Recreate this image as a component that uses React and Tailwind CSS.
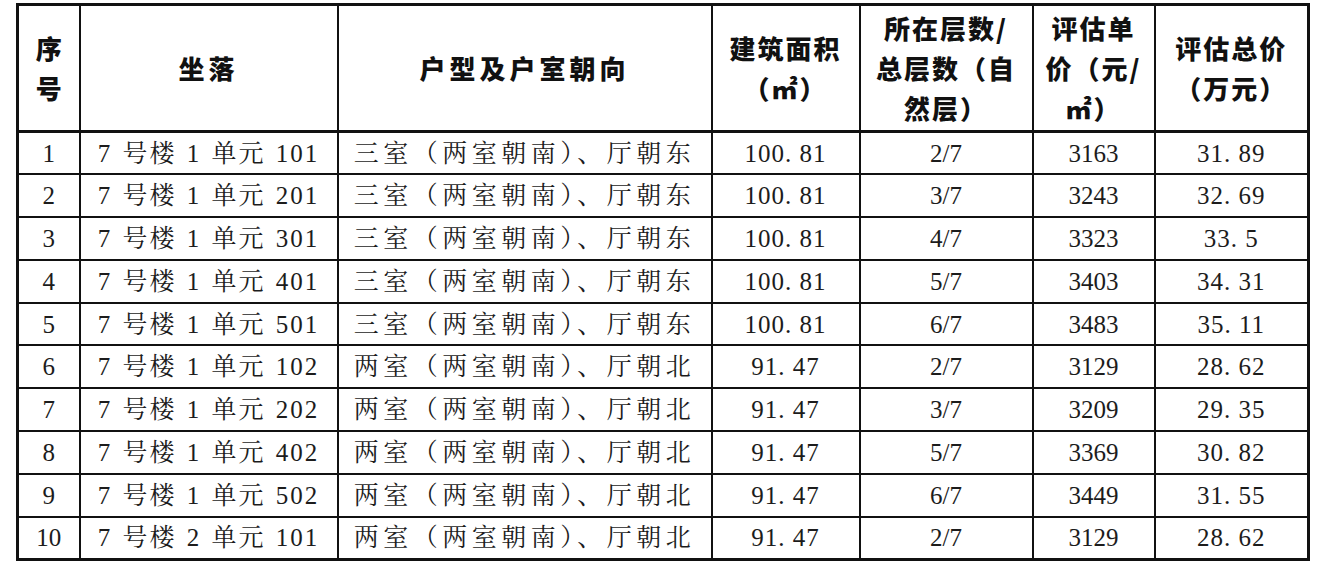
import React from "react";

const rows = [
  ["1", "7 号楼 1 单元 101", "三室（两室朝南）、厅朝东", "100. 81", "2/7", "3163", "31. 89"],
  ["2", "7 号楼 1 单元 201", "三室（两室朝南）、厅朝东", "100. 81", "3/7", "3243", "32. 69"],
  ["3", "7 号楼 1 单元 301", "三室（两室朝南）、厅朝东", "100. 81", "4/7", "3323", "33. 5"],
  ["4", "7 号楼 1 单元 401", "三室（两室朝南）、厅朝东", "100. 81", "5/7", "3403", "34. 31"],
  ["5", "7 号楼 1 单元 501", "三室（两室朝南）、厅朝东", "100. 81", "6/7", "3483", "35. 11"],
  ["6", "7 号楼 1 单元 102", "两室（两室朝南）、厅朝北", "91. 47", "2/7", "3129", "28. 62"],
  ["7", "7 号楼 1 单元 202", "两室（两室朝南）、厅朝北", "91. 47", "3/7", "3209", "29. 35"],
  ["8", "7 号楼 1 单元 402", "两室（两室朝南）、厅朝北", "91. 47", "5/7", "3369", "30. 82"],
  ["9", "7 号楼 1 单元 502", "两室（两室朝南）、厅朝北", "91. 47", "6/7", "3449", "31. 55"],
  ["10", "7 号楼 2 单元 101", "两室（两室朝南）、厅朝北", "91. 47", "2/7", "3129", "28. 62"],
];

const serif = "font-['Liberation_Serif','Noto_Serif_CJK_SC','Noto_Sans_CJK_SC',serif]";

function Head({ children, className = "" }) {
  return (
    <th
      className={`border-2 border-[#111] p-0 text-center align-middle font-black text-[26px] leading-[40px] tracking-[2px] text-[#111] font-['Noto_Sans_CJK_SC',sans-serif] ${className}`}
    >
      {children}
    </th>
  );
}

export default function App() {
  return (
    <div className="w-[1324px] h-[568px] bg-white overflow-hidden relative">
      <table className="ml-[16px] mt-[3px] border-collapse table-fixed border-[3px] border-[#111]">
        <colgroup>
          <col className="w-[62px]" />
          <col className="w-[258px]" />
          <col className="w-[374px]" />
          <col className="w-[148px]" />
          <col className="w-[173px]" />
          <col className="w-[122px]" />
          <col className="w-[154px]" />
        </colgroup>
        <thead>
          <tr className="h-[127px] border-b-[3px] border-[#111]">
            <Head className="leading-[38px] tracking-normal">序<br />号</Head>
            <Head className="tracking-[4px]">坐落</Head>
            <Head className="tracking-[4px]">户型及户室朝向</Head>
            <Head>建筑面积<br />（㎡）</Head>
            <Head>所在层数/<br />总层数（自<br />然层）</Head>
            <Head>评估单<br />价（元/<br />㎡）</Head>
            <Head>评估总价<br />（万元）</Head>
          </tr>
        </thead>
        <tbody>
          {rows.map((r) => (
            <tr key={r[0]} className="h-[42.8px]">
              {r.map((c, i) => (
                <td
                  key={i}
                  className={`border-2 border-[#111] p-0 text-center align-middle text-[25px] leading-none text-[#1c1c1c] whitespace-nowrap ${serif} ${
                    i === 2
                      ? "tracking-[4.5px]"
                      : i === 1
                      ? "tracking-[2px] [word-spacing:2px]"
                      : i === 3 || i === 6
                      ? "tracking-[1px]"
                      : ""
                  }`}
                >
                  {c}
                </td>
              ))}
            </tr>
          ))}
        </tbody>
      </table>
    </div>
  );
}
